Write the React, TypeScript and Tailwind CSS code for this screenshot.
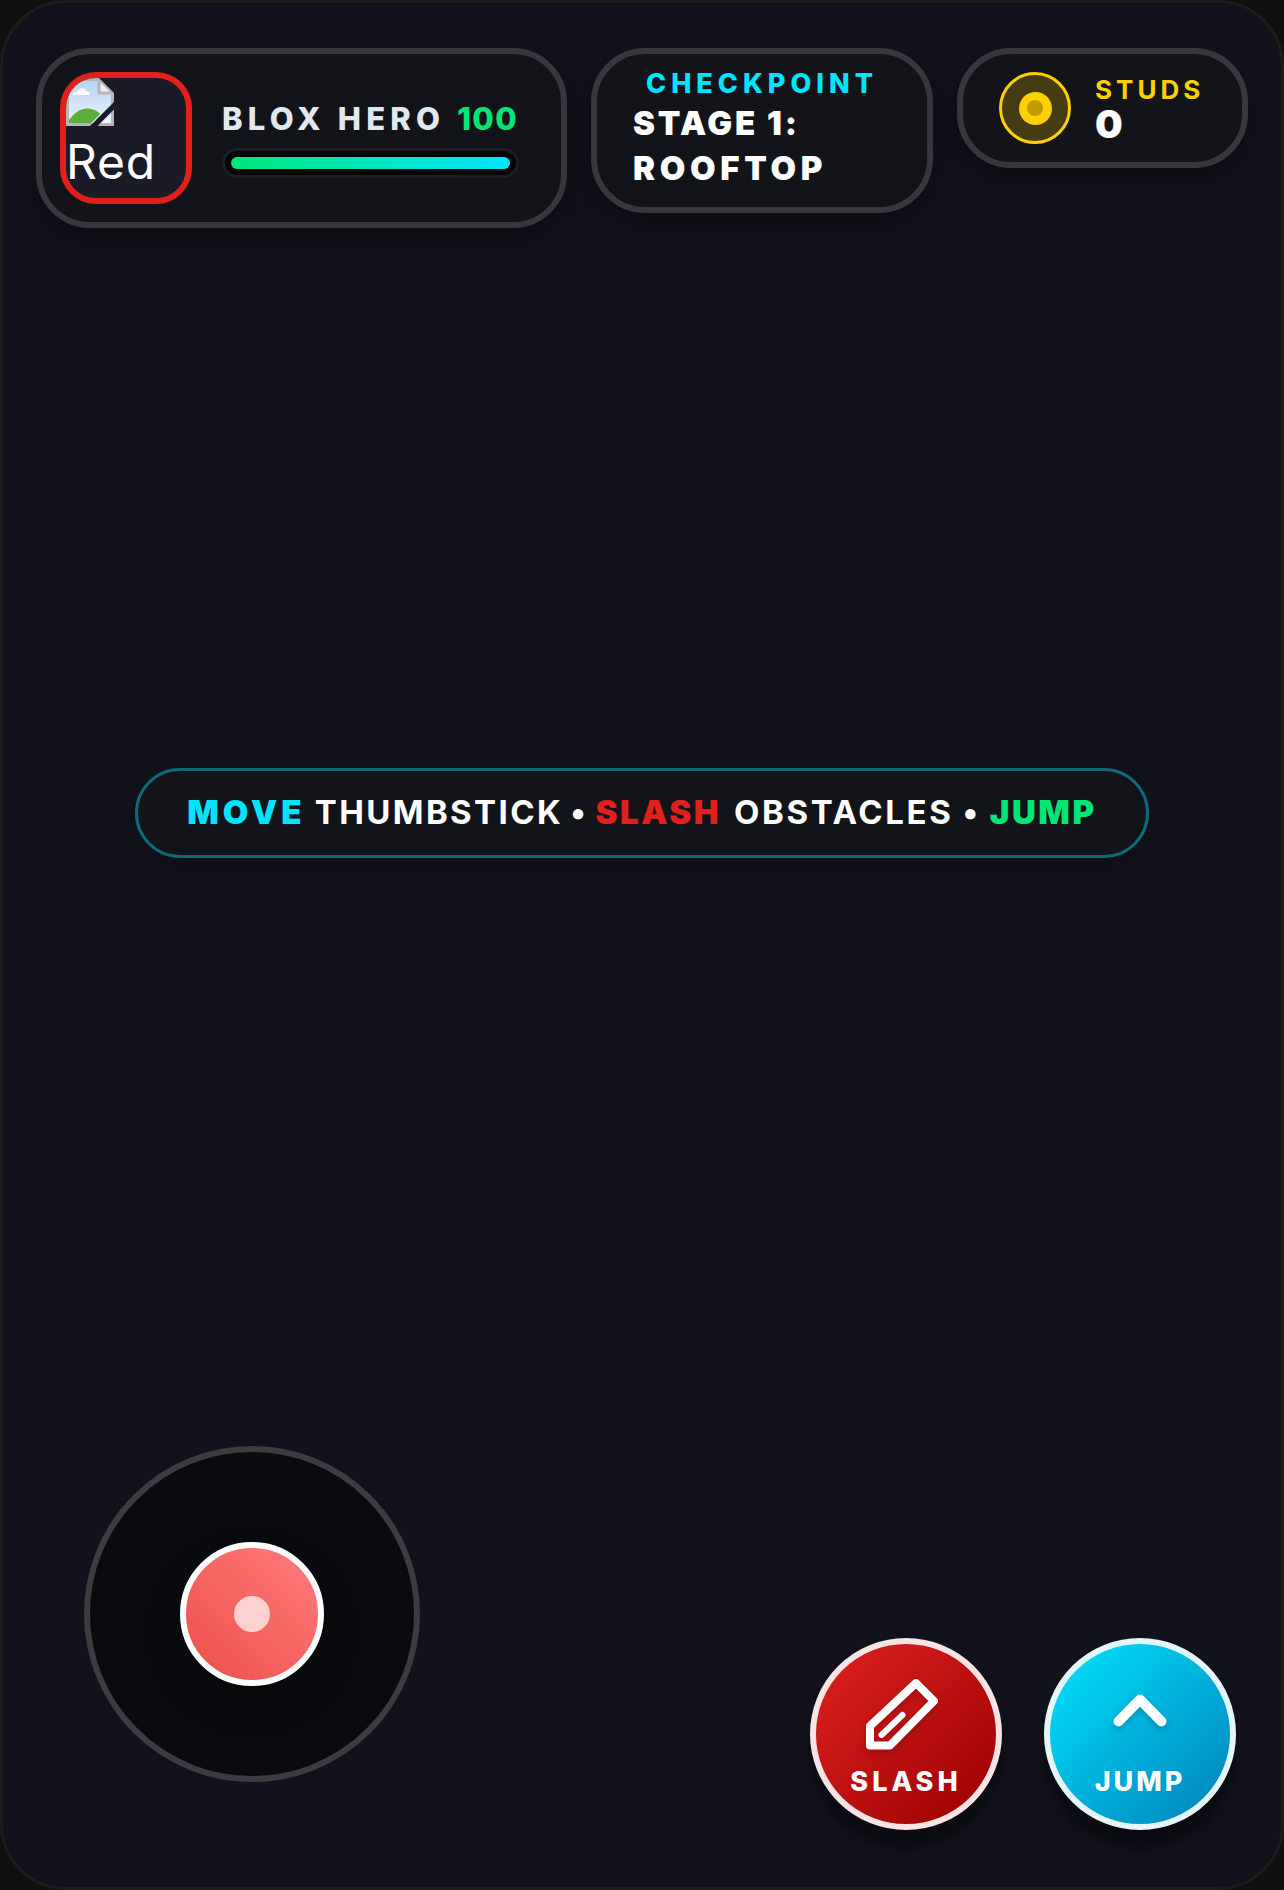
import React from 'react';

const sans = "font-['Inter','Liberation_Sans',sans-serif]";

function BrokenImage() {
  return (
    <svg width="48" height="48" viewBox="0 0 16 16" className="block">
      <defs>
        <linearGradient id="sky" x1="0" y1="0" x2="0" y2="1">
          <stop offset="0" stopColor="#b9d2f2" />
          <stop offset="1" stopColor="#eef4fc" />
        </linearGradient>
      </defs>
      <path d="M0 0H11L16 5V16H0Z" fill="#b5b5b5" />
      <path d="M1 1H10.5V5.5H15V15H1Z" fill="url(#sky)" />
      <path d="M11.5 1.5L14.5 4.5H11.5Z" fill="#f0f0f0" />
      <path d="M2.3 5.7C2.3 4.7 3.2 4.4 4 4.5C4.4 3 6.4 3 6.8 4.5C7.6 4.4 8.2 5 8 5.7Z" fill="#ffffff" />
      <path d="M1 15V14C3 11.4 5 10.2 7 10.2C9 10.2 10.4 11 11.4 12L8.4 15Z" fill="#5cae3c" />
      <path d="M16 8V10.5L10.5 16H8Z" fill="#1a1b26" />
    </svg>
  );
}

function Coin() {
  return (
    <div className="flex h-[72px] w-[72px] shrink-0 items-center justify-center rounded-full border-[3px] border-[#ffd000] bg-[#453c14]">
      <div className="flex h-[33px] w-[33px] items-center justify-center rounded-full bg-[#ffd000]">
        <div className="h-[16px] w-[16px] rounded-full bg-[#c29a00]" />
      </div>
    </div>
  );
}

function PencilIcon() {
  return (
    <svg width="72" height="72" viewBox="0 0 72 72" fill="none" stroke="#ffffff" strokeLinecap="round" strokeLinejoin="round" className="mr-[8px] shrink-0 drop-shadow-[0_3px_3px_rgba(0,0,0,0.2)]">
      <path d="M50 5L68 23L24 67.5H4V48Z" strokeWidth="8" />
      <path d="M15.5 57L36.5 37" strokeWidth="6" />
    </svg>
  );
}

function ChevronIcon() {
  return (
    <svg width="72" height="72" viewBox="0 0 72 72" fill="none" stroke="#ffffff" strokeWidth="10" strokeLinecap="round" strokeLinejoin="round" className="shrink-0 drop-shadow-[0_3px_3px_rgba(0,0,0,0.2)]">
      <path d="M14.5 43.5L36 21.5L57.5 43.5" />
    </svg>
  );
}

export default function App() {
  return (
    <div className="h-[1890px] w-[1284px] overflow-hidden bg-[#101010]">
      <div className={`${sans} flex h-full w-full flex-col rounded-[66px] border-[3px] border-[#1c1c1c] bg-[#11121b] px-[33px] pt-[45px] pb-[57px]`}>
        {/* top hud */}
        <div className="flex items-start gap-6">
          <div className="flex h-[180px] w-[531px] items-center gap-[30px] rounded-[54px] border-[6px] border-[#36373d] bg-[#13141a] px-[18px] shadow-[0_12px_30px_rgba(0,0,0,0.3)]">
            <div className="h-[132px] w-[132px] shrink-0 overflow-hidden rounded-[36px] border-[6px] border-[#e0201a] bg-[#1a1b26] text-[48px] leading-[72px] tracking-[0.8px] text-white">
              <BrokenImage />
              Red
            </div>
            <div className="w-[297px]">
              <div className="flex items-center gap-[12px] text-[31px] leading-[40px] font-extrabold text-[#e2e8f0]">
                <span className="tracking-[5.2px]">BLOX HERO</span>
                <span className="tracking-[1.5px] text-[#00e676]">100</span>
              </div>
              <div className="mt-[9px] h-[30px] rounded-full border-[3px] border-[#1e1f26] bg-[#050507] p-[6px]">
                <div className="h-[12px] w-full rounded-full bg-gradient-to-r from-[#00e676] to-[#00e5ff]" />
              </div>
            </div>
          </div>

          <div className="h-[165px] w-[342px] rounded-[54px] border-[6px] border-[#36373d] bg-[#13141a] px-[36px] pt-[12px] shadow-[0_12px_30px_rgba(0,0,0,0.3)]">
            <div className="text-center text-[27px] leading-[36px] font-extrabold tracking-[5px] text-[#00e5ff]">CHECKPOINT</div>
            <div className="-mt-[1px] text-[33px] leading-[45px] font-black text-white">
              <span className="tracking-[2.7px]">STAGE 1:</span>
              <br />
              <span className="tracking-[4.7px]">ROOFTOP</span>
            </div>
          </div>

          <div className="flex h-[120px] w-[291px] items-center gap-6 rounded-[54px] border-[6px] border-[#36373d] bg-[#13141a] px-[36px] shadow-[0_12px_30px_rgba(0,0,0,0.3)]">
            <Coin />
            <div>
              <div className="text-[26px] leading-[32px] font-bold tracking-[4px] text-[#ffd000]">STUDS</div>
              <div className="text-[39px] leading-[36px] font-black text-white">0</div>
            </div>
          </div>
        </div>

        {/* hint */}
        <div className="mt-[540px] flex justify-center">
          <div className="flex h-[90px] w-[1014px] items-center justify-center gap-[9px] rounded-full border-[3px] border-[#0e6a7a] bg-[#13141a] text-[33px] font-bold tracking-[2.6px] text-white shadow-[0_12px_30px_rgba(0,0,0,0.2)]">
            <span className="font-black tracking-[4.1px] text-[#00e5ff]">MOVE</span>
            <span className="tracking-[2.4px]">THUMBSTICK</span>
            <span className="-mx-[2px]">•</span>
            <span className="mr-[4px] font-black text-[#e0201a]">SLASH</span>
            <span>OBSTACLES</span>
            <span>•</span>
            <span className="font-black text-[#00e676]">JUMP</span>
          </div>
        </div>

        {/* controls */}
        <div className="mt-auto flex items-end justify-between pl-[48px] pr-[12px]">
          <div className="mb-[48px] flex h-[336px] w-[336px] items-center justify-center rounded-full border-[6px] border-[#3b3c40] bg-[#0a0b0e]">
            <div className="flex h-[144px] w-[144px] items-center justify-center rounded-full border-[6px] border-white bg-gradient-to-tr from-[#ec4f4a] to-[#ff7b7b] shadow-[0_18px_36px_rgba(0,0,0,0.25)]">
              <div className="h-[36px] w-[36px] rounded-full bg-white/70" />
            </div>
          </div>

          <div className="flex gap-[42px]">
            <button className="flex h-[192px] w-[192px] flex-col items-center rounded-full border-[6px] border-[#f8e4e4] bg-gradient-to-br from-[#e02020] to-[#9a0000] pt-[34px] text-[27px] leading-[34px] font-extrabold tracking-[4px] text-white shadow-[0_18px_12px_rgba(0,0,0,0.35)]">
              <PencilIcon />
              <span className="mt-[15px]">SLASH</span>
            </button>
            <button className="flex h-[192px] w-[192px] flex-col items-center rounded-full border-[6px] border-[#e4f6fc] bg-gradient-to-br from-[#00e5ff] to-[#0080b8] pt-[34px] text-[27px] leading-[34px] font-extrabold tracking-[3px] text-white shadow-[0_18px_12px_rgba(0,0,0,0.35)]">
              <ChevronIcon />
              <span className="mt-[15px]">JUMP</span>
            </button>
          </div>
        </div>
      </div>
    </div>
  );
}
